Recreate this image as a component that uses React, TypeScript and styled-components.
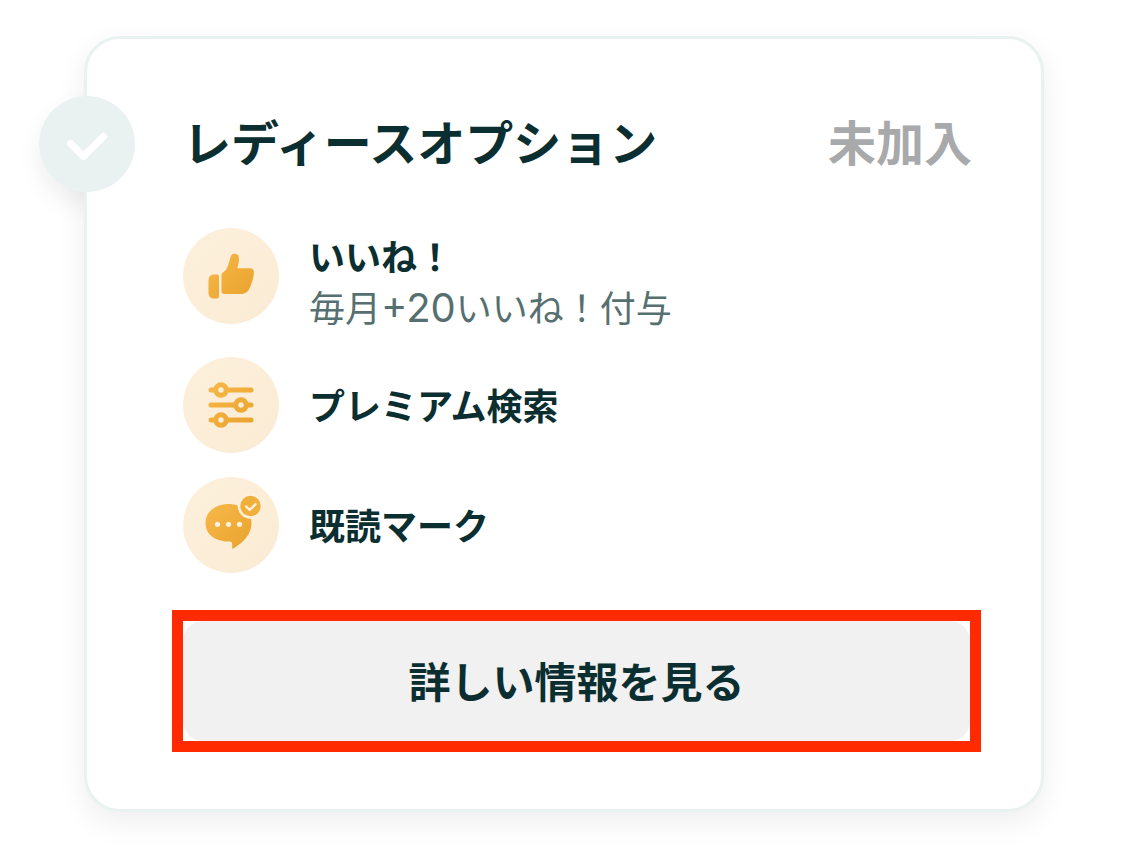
import React from 'react';
import styled, { createGlobalStyle } from 'styled-components';

const GlobalStyle = createGlobalStyle`
  *, *::before, *::after { box-sizing: border-box; }
  body {
    margin: 0;
    background: #ffffff;
    color: #0b2e30;
    font-family: Inter, "Noto Sans CJK JP", sans-serif;
  }
  h2, h3, p, ul { margin: 0; padding: 0; }
`;

const Page = styled.main`
  isolation: isolate;
  padding: 36px 81px 37px 84px;
`;

const Card = styled.section`
  position: relative;
  padding: 57px 60px 57px 85px;
  border: 3px solid #e9f2f1;
  border-radius: 36px;
  background: #ffffff;
  box-shadow: 0 10px 30px rgba(0, 0, 0, 0.07);
`;

/* The shadow sits on a layer behind the card, so it only falls on the page. */
const Badge = styled.span`
  position: absolute;
  top: 57px;
  left: -48px;
  width: 96px;
  height: 96px;
  border-radius: 50%;
  background: #e9f2f1;

  &::before {
    content: '';
    position: absolute;
    inset: 0;
    z-index: -1;
    border-radius: 50%;
    box-shadow: 0 12px 24px rgba(0, 0, 0, 0.07);
  }
`;

const Header = styled.header`
  display: flex;
  align-items: center;
  justify-content: space-between;
  height: 96px;
  padding: 0 9px 0 11px;
`;

const Title = styled.h2`
  font-size: 48px;
  line-height: 72px;
  font-weight: 600;
`;

const Status = styled.p`
  font-size: 48px;
  line-height: 72px;
  font-weight: 600;
  color: #a7a9aa;
`;

const Features = styled.ul`
  display: flex;
  flex-direction: column;
  gap: 24px;
  margin-top: 36px;
  padding: 0 11px;
  list-style: none;
`;

const Feature = styled.li`
  display: flex;
  align-items: center;
  gap: 30px;
`;

const IconDisc = styled.span<{ $top?: boolean }>`
  flex: none;
  align-self: ${(p) => (p.$top ? 'flex-start' : 'center')};
  width: 96px;
  height: 96px;
  border-radius: 50%;
  background: linear-gradient(135deg, #fdf0dc, #faebd3);
`;

const Icon = styled.svg`
  display: block;
  width: 96px;
  height: 96px;
`;

const FeatureText = styled.div`
  padding-top: 3px;
`;

const FeatureName = styled.h3`
  font-size: 36px;
  line-height: 54px;
  font-weight: 600;
`;

const FeatureNote = styled.p`
  font-size: 36px;
  line-height: 48px;
  font-weight: 400;
  color: #566f70;
`;

const Amount = styled.span`
  font-size: 40px;
  line-height: 40px;
  font-weight: 400;
`;

const Highlight = styled.div`
  margin-top: 37px;
  border: 11px solid #ff2a00;
`;

const DetailButton = styled.button`
  display: block;
  width: 100%;
  height: 120px;
  padding: 3px 0 0;
  border: 0;
  border-radius: 20px;
  background: #f1f1f1;
  color: inherit;
  font: inherit;
  font-size: 42px;
  line-height: 60px;
  font-weight: 600;
  cursor: pointer;
`;

function Gradient({ id }: { id: string }) {
  return (
    <defs>
      <linearGradient id={id} gradientUnits="userSpaceOnUse" x1="25" y1="25" x2="70" y2="70">
        <stop offset="0" stopColor="#f7b84a" />
        <stop offset="1" stopColor="#e9a32c" />
      </linearGradient>
    </defs>
  );
}

function ThumbIcon() {
  return (
    <Icon viewBox="0 0 96 96" aria-hidden="true">
      <Gradient id="thumb" />
      <g fill="url(#thumb)">
        <path d="M31 46.500H34Q36 46.500 36 48.500V68.500Q36 70.500 34 70.500H31Q25.500 70.500 25.500 64.500V52.500Q25.500 46.500 31 46.500Z" />
        <path d="M39.500 45Q44 42 45.500 36L47.500 29Q48.500 25.500 51.500 25.500Q56 25.500 56 31Q56 34 55.200 36.500L54.500 39.500Q54.400 40.300 55.200 40.300H67Q71 40.300 71 45Q70.500 51 67.500 58.500Q64.500 66 58.500 66H41.500Q38.500 66 38.500 63V47Q38.500 45.700 39.500 45Z" />
      </g>
    </Icon>
  );
}

function FilterIcon() {
  return (
    <Icon viewBox="0 0 96 96" aria-hidden="true">
      <Gradient id="filter" />
      <g fill="none" stroke="url(#filter)" strokeWidth="5" strokeLinecap="round">
        <path d="M28 33H32M44 33H68M28 48H52M64 48H68M28 63H32M44 63H68" />
        <circle cx="38" cy="33" r="5.200" />
        <circle cx="58" cy="48" r="5.200" />
        <circle cx="38" cy="63" r="5.200" />
      </g>
    </Icon>
  );
}

function ReadIcon() {
  return (
    <Icon viewBox="0 0 96 96" aria-hidden="true">
      <Gradient id="read" />
      <path
        fill="url(#read)"
        d="M45.500 27C58 27 68.500 34.500 68.500 46C68.500 57.500 60 66 49.200 72V67Q49.200 64.500 46.500 64.500C32 64.500 22.500 57.500 22.500 46C22.500 34.500 33 27 45.500 27Z"
      />
      <g fill="#fdf0dc">
        <circle cx="34.500" cy="47.300" r="2.600" />
        <circle cx="45.500" cy="47.300" r="2.600" />
        <circle cx="56.500" cy="47.300" r="2.600" />
        <circle cx="67.500" cy="29" r="12.800" />
      </g>
      <circle cx="67.500" cy="29" r="10.200" fill="#f1af3c" />
      <path d="M63.200 29.500L66.700 33L72.500 27.200" fill="none" stroke="#fdf0dc" strokeWidth="2.400" strokeLinecap="round" strokeLinejoin="round" />
    </Icon>
  );
}

export default function App() {
  return (
    <>
      <GlobalStyle />
      <Page>
        <Card>
          <Badge>
            <Icon viewBox="0 0 96 96" aria-hidden="true">
              <path d="M31.500 47.500L44.500 60.500L64.500 40.500" fill="none" stroke="#ffffff" strokeWidth="7" strokeLinecap="round" strokeLinejoin="round" />
            </Icon>
          </Badge>
          <Header>
            <Title>レディースオプション</Title>
            <Status>未加入</Status>
          </Header>
          <Features>
            <Feature>
              <IconDisc $top><ThumbIcon /></IconDisc>
              <FeatureText>
                <FeatureName>いいね！</FeatureName>
                <FeatureNote>毎月<Amount>+20</Amount>いいね！付与</FeatureNote>
              </FeatureText>
            </Feature>
            <Feature>
              <IconDisc><FilterIcon /></IconDisc>
              <FeatureText>
                <FeatureName>プレミアム検索</FeatureName>
              </FeatureText>
            </Feature>
            <Feature>
              <IconDisc><ReadIcon /></IconDisc>
              <FeatureText>
                <FeatureName>既読マーク</FeatureName>
              </FeatureText>
            </Feature>
          </Features>
          <Highlight>
            <DetailButton type="button">詳しい情報を見る</DetailButton>
          </Highlight>
        </Card>
      </Page>
    </>
  );
}
